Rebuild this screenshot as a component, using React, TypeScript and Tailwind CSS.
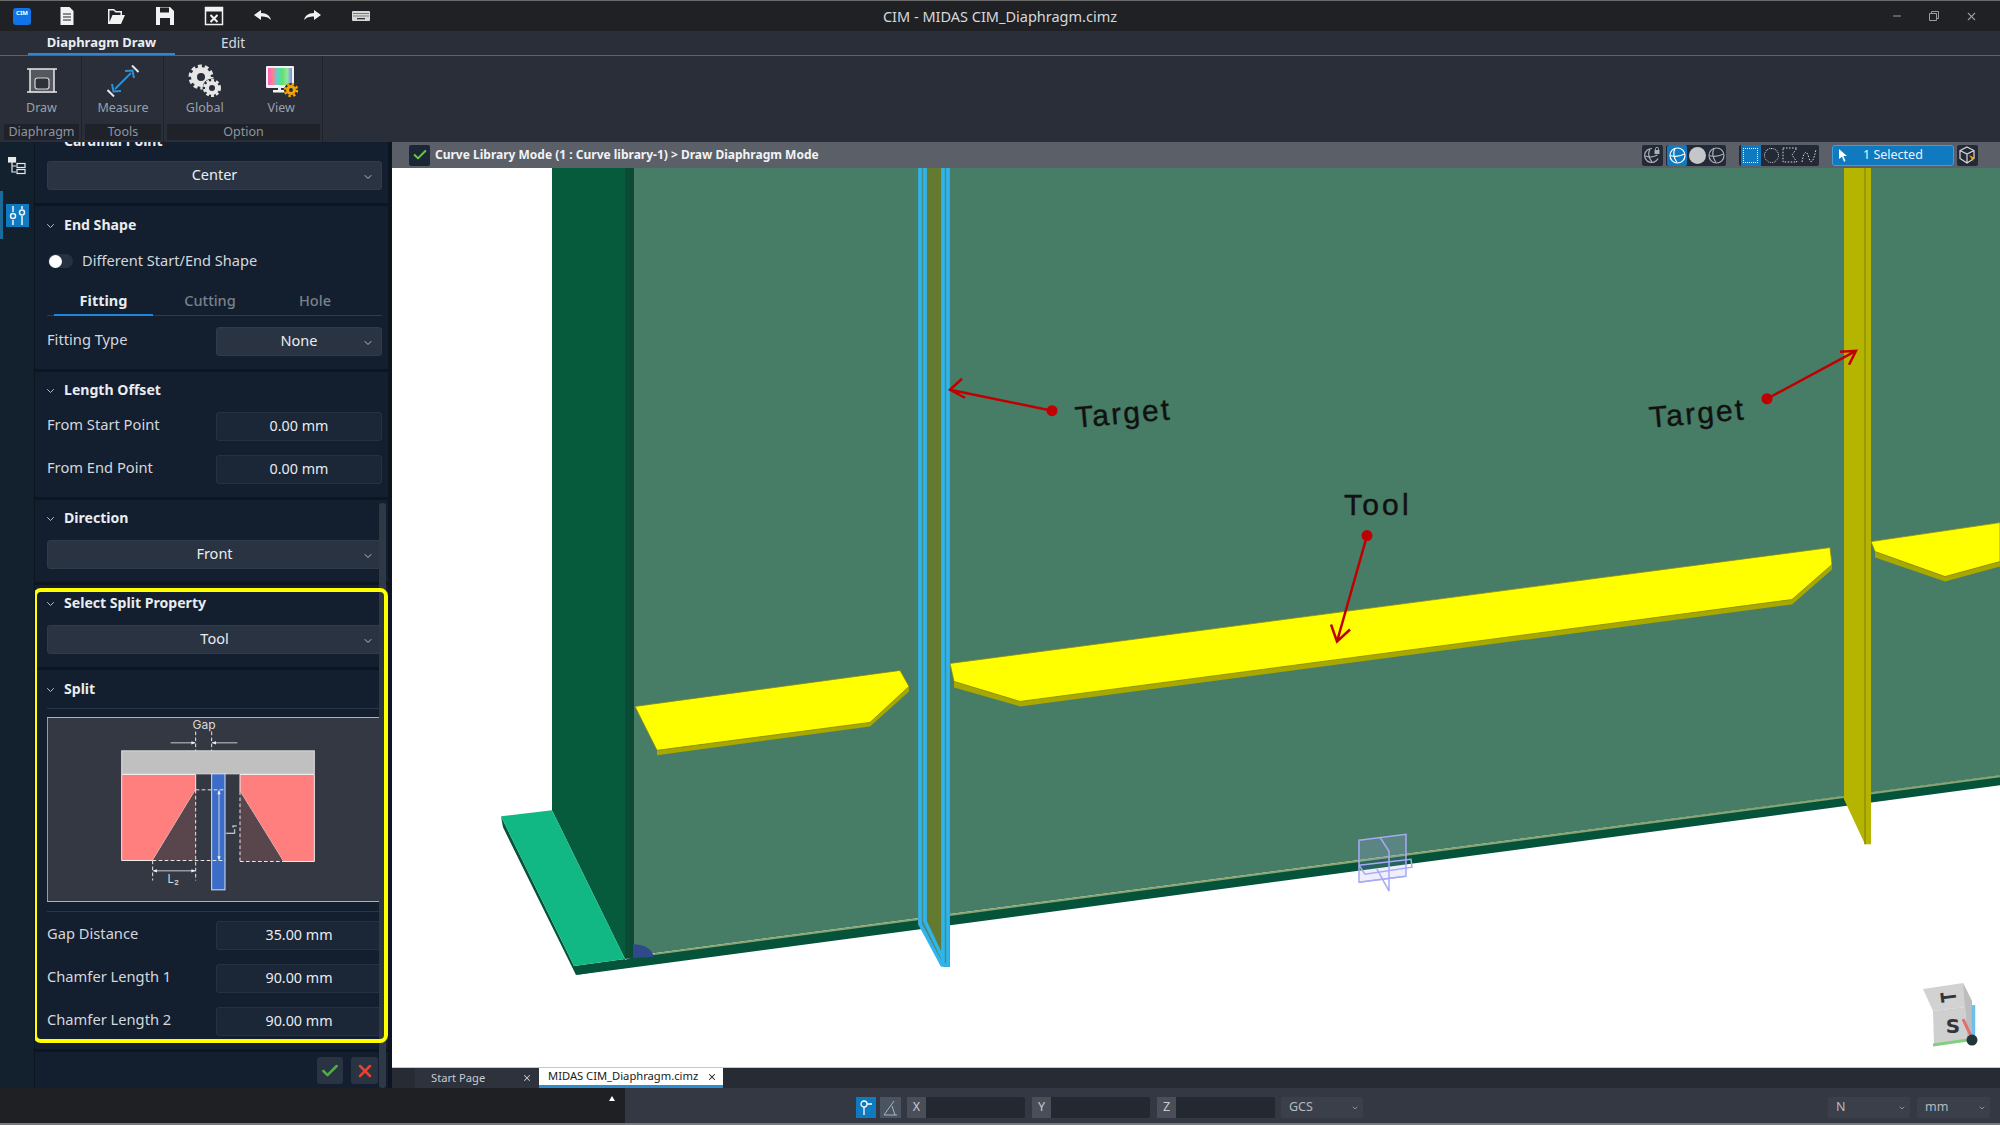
import { ChevronDown, Check, X, Minus } from "lucide-react";
import type { ReactNode } from "react";

const SectionGap = () => <div className="h-[3px] shrink-0 -ml-[12px] -mr-[6px] bg-[#0c1520]" />;

const Chevron = ({ className = "" }: { className?: string }) => (
  <ChevronDown size={12} strokeWidth={2} className={`text-[#b8bec8] ${className}`} />
);

const Header = ({ title, className = "" }: { title: string; className?: string }) => (
  <div className={`flex h-5 items-center ${className}`}>
    <Chevron className="ml-[-3px] w-[13px]" />
    <span className="ml-[7px] pb-[2px] text-[14.1px] font-bold text-[#e9ecf0]">{title}</span>
  </div>
);

const Select = ({ value, className = "" }: { value: string; className?: string }) => (
  <div className={`relative flex h-[29px] items-center justify-center rounded-[3px] border border-[#2f3a4a] bg-[#2a3342] pb-[2px] text-[14.5px] text-[#e9ecf0] ${className}`}>
    {value}
    <Chevron className="absolute right-[7px] top-[9px]" />
  </div>
);

const Field = ({ label, value, className = "" }: { label: string; value: string; className?: string }) => (
  <div className={`flex h-[29px] items-center justify-between ${className}`}>
    <span className="pb-[5px] text-[14.7px] text-[#d3d7dd]">{label}</span>
    <div className="flex h-full w-[166px] items-center justify-center rounded-[3px] border border-[#263143] bg-[#1b2636] pb-[2px] text-[14.3px] text-[#e9ecf0]">{value}</div>
  </div>
);

const TopIcon = ({ children }: { children: ReactNode }) => (
  <svg width="20" height="20" viewBox="0 0 20 20" className="block">{children}</svg>
);

const TitleBar = () => (
  <div className="relative flex h-[31px] items-center border-t border-[#6a6a6a] bg-[#1f2125]">
    <div className="ml-[13px] flex h-[17px] w-[18px] items-start justify-center rounded-[3px] bg-[#1272e8] pt-[2px] text-[6px] font-bold leading-[7px] text-white">CIM</div>
    <div className="ml-[26px] flex items-center gap-[29px]">
      <TopIcon><path d="M3.500 1h9l4 4v14h-13z" fill="#f2f2f2" /><path d="M6 8h8M6 11h8M6 14h8" stroke="#1f2125" strokeWidth="1" /></TopIcon>
      <TopIcon><path d="M2 18V3h6l2 2h6v4h3l-4 9zM3.500 16l3-7h8V6.500H9.500L7.500 4.500h-4z" fill="#f2f2f2" fillRule="evenodd" /></TopIcon>
      <TopIcon><path d="M1 1h14l4 4v14H1z" fill="#f2f2f2" /><path d="M5 1.500h9v5H5zM5 12h10v7H5z" fill="#1f2125" /></TopIcon>
      <TopIcon><rect x="1.500" y="1.500" width="17" height="17" fill="none" stroke="#f2f2f2" strokeWidth="1.500" /><rect x="1.500" y="1.500" width="17" height="4" fill="#f2f2f2" /><path d="M6.500 9l7 7M13.500 9l-7 7" stroke="#f2f2f2" strokeWidth="2" /></TopIcon>
      <TopIcon><path d="M1 9l7-5v3c6 0 9 3 10 7-2.500-2.500-5-3.500-10-3.500V14z" fill="#f2f2f2" /></TopIcon>
      <TopIcon><path d="M19 9l-7-5v3C6 7 3 10 2 14c2.500-2.500 5-3.500 10-3.500V14z" fill="#f2f2f2" /></TopIcon>
      <TopIcon><rect x="1" y="5" width="18" height="10" rx="1" fill="#d8d8d8" /><path d="M2.500 7.500h15M2.500 10h15" stroke="#1f2125" strokeWidth="1" strokeDasharray="1 1" /><path d="M6 12.700h8" stroke="#1f2125" strokeWidth="1.200" /></TopIcon>
    </div>
    <span className="absolute left-0 right-0 pt-[1px] text-center text-[14.5px] text-[#d6d8dc]">CIM - MIDAS CIM_Diaphragm.cimz</span>
    <div className="ml-auto mr-[22px] flex items-center gap-[25px] text-[#9a9ca0]">
      <Minus size={12} />
      <svg width="12" height="12" viewBox="0 0 12 12" fill="none" stroke="currentColor"><path d="M1.500 3.500h7v7h-7zM3.500 3.500v-2h7v7h-2" /></svg>
      <X size={13} />
    </div>
  </div>
);

const TabStrip = () => (
  <div className="flex h-[25px] items-stretch border-b border-[#2f6ea8] bg-[#292e38] text-[14px]">
    <div className="ml-[28px] flex w-[147px] items-center justify-center border-b-2 border-[#2f86d2] pt-[2px] text-[13px] font-bold text-[#eceef2]">Diaphragm Draw</div>
    <div className="ml-[31px] flex w-[54px] items-center justify-center pt-[1px] text-[13.5px] text-[#d8dbe0]">Edit</div>
  </div>
);

const RibbonButton = ({ label, icon, w }: { label: string; icon: ReactNode; w: string }) => (
  <div className={`flex flex-col items-center ${w}`}>
    <div className="flex h-[34px] w-full items-center justify-center">{icon}</div>
    <span className="mt-[2px] text-[12.5px] leading-[16px] text-[#99a0ad]">{label}</span>
  </div>
);

const RibbonGroup = ({ label, children, w }: { label: string; children: ReactNode; w: string }) => (
  <div className={`flex flex-col border-r border-[#1f2329] pr-[2px] ${w}`}>
    <div className="flex h-[68px] pt-[8px]">{children}</div>
    <div className="flex h-[16px] items-center justify-center bg-[#1f2329] text-[12.5px] text-[#8e95a2]">{label}</div>
  </div>
);

const Ribbon = () => (
  <div className="flex h-[86px] gap-[3px] bg-[#2a2e38] pl-[4px]">
    <RibbonGroup label="Diaphragm" w="w-[78px]">
      <RibbonButton label="Draw" w="w-[76px]" icon={
        <svg width="32" height="28" viewBox="0 0 32 28">
          <rect x="4" y="2" width="24" height="24" fill="#55585e" />
          <path d="M1 2h30M1 25h30M4 2v23M28 2v23" stroke="#e8e8e8" strokeWidth="1.500" />
          <rect x="9" y="11" width="14" height="11" rx="2.500" fill="#2d3138" stroke="#d5d5d5" strokeWidth="1.200" />
        </svg>
      } />
    </RibbonGroup>
    <RibbonGroup label="Tools" w="w-[79px]">
      <RibbonButton label="Measure" w="w-[77px]" icon={
        <svg width="32" height="32" viewBox="0 0 32 32" fill="none">
          <path d="M8 24L24 8" stroke="#2f8fd6" strokeWidth="2" />
          <path d="M5 19l1.500 7.500L14 26M27 13l-1.500-7.500L18 6" stroke="#2f8fd6" strokeWidth="2" />
          <path d="M0.500 25l6.500 6.500M25 0.500l6.500 6.500" stroke="#e8e8e8" strokeWidth="2" />
        </svg>
      } />
    </RibbonGroup>
    <RibbonGroup label="Option" w="w-[156px]">
      <RibbonButton label="Global" w="w-[76px]" icon={
        <svg width="34" height="34" viewBox="0 0 34 34" fill="none" stroke="#e6e6e6">
          <circle cx="13" cy="13" r="7" strokeWidth="6" />
          <circle cx="13" cy="13" r="10.500" strokeWidth="4" strokeDasharray="3.800 2.800" />
          <circle cx="24" cy="24" r="9.500" fill="#2a2e38" stroke="none" />
          <circle cx="24" cy="24" r="5" strokeWidth="4" />
          <circle cx="24" cy="24" r="7.500" strokeWidth="3" strokeDasharray="2.800 2.100" />
        </svg>
      } />
      <RibbonButton label="View" w="w-[78px]" icon={
        <svg width="33" height="34" viewBox="0 0 33 34">
          <defs>
            <linearGradient id="rainbow" x1="0" x2="1" y1="0" y2="0">
              <stop offset="0" stopColor="#ff60c0" />
              <stop offset="0.2" stopColor="#ff8090" />
              <stop offset="0.4" stopColor="#50d8d0" />
              <stop offset="0.6" stopColor="#60e070" />
              <stop offset="0.8" stopColor="#90e8a0" />
              <stop offset="1" stopColor="#8a80f0" />
            </linearGradient>
          </defs>
          <rect x="1" y="2" width="28" height="22" rx="1" fill="#f2f2f2" />
          <rect x="3" y="4" width="24" height="17" fill="url(#rainbow)" />
          <path d="M8 26h14v2.500H8zM13 24h3v3h-3z" fill="#f2f2f2" />
          <circle cx="26" cy="26" r="7" fill="#2a2e38" />
          <circle cx="26" cy="26" r="3.500" fill="none" stroke="#f5a400" strokeWidth="3" />
          <circle cx="26" cy="26" r="6" fill="none" stroke="#f5a400" strokeWidth="2.500" strokeDasharray="2.400 2.300" />
        </svg>
      } />
    </RibbonGroup>
  </div>
);

const Rail = () => (
  <div className="flex w-[35px] shrink-0 flex-col items-stretch border-r border-[#0c1520] bg-[#13202e]">
    <div className="flex h-[49px] items-center justify-center pb-[2px]">
      <svg width="18" height="18" viewBox="0 0 18 18" fill="none" stroke="#e8e8e8" strokeWidth="1.200">
        <rect x="0.500" y="0.500" width="7" height="4.500" fill="#e8e8e8" />
        <path d="M4 5v10h4M4 9h4" />
        <rect x="9" y="6.500" width="8" height="4" />
        <rect x="9" y="12.500" width="8" height="4" />
      </svg>
    </div>
    <div className="flex h-[48px] items-center justify-center border-l-[3px] border-[#1a6a9a] pr-[3px]">
      <div className="flex h-[23px] w-[23px] items-center justify-center bg-[#0f7ac0]">
        <svg width="17" height="19" viewBox="0 0 17 19" fill="none" stroke="#e8f4ff" strokeWidth="1.500">
          <path d="M4 0v6M4 14v5M13 0v3M13 10v9" />
          <circle cx="4" cy="10" r="2.500" />
          <circle cx="13" cy="6.500" r="2.500" />
        </svg>
      </div>
    </div>
  </div>
);

const SplitDiagram = () => (
  <svg viewBox="51 22 1005 554" className="mt-2 block h-[185px] w-[335px] shrink-0">
    <rect x="52" y="23" width="1003" height="552" fill="#333842" stroke="#aeb2b8" strokeWidth="3" />
    <rect x="275" y="123" width="578" height="69" fill="#c0c0c0" stroke="#dcdcdc" strokeWidth="3" />
    <path d="M275 194H497V240L368 452H275Z" fill="#ff7f7f" stroke="#eeeeee" strokeWidth="3" />
    <path d="M630 194H853V455H760L630 245Z" fill="#ff7f7f" stroke="#eeeeee" strokeWidth="3" />
    <path d="M497 240V452H368Z" fill="#59454c" />
    <path d="M630 245L760 455H630Z" fill="#59454c" />
    <rect x="545" y="192" width="40" height="348" fill="#3a6cc8" stroke="#d8e0f0" strokeWidth="3" />
    <g stroke="#e8e8e8" strokeWidth="3" fill="none" strokeDasharray="11 7">
      <path d="M497 65V123M545 65V123M497 240V512M630 245V455M368 452V512" />
      <path d="M497 240H585M368 452H585M630 455H760" />
    </g>
    <g stroke="#e8e8e8" strokeWidth="2.500" fill="none">
      <path d="M422 99H495M622 99H547M370 483H495M567 244V448" />
    </g>
    <g fill="#f0f0f0">
      <path d="M497 99l-13-5v10zM545 99l13-5v10zM368 483l13-5v10zM497 483l-13-5v10zM567 240l-5 13h10zM567 452l-5-13h10z" />
    </g>
    <text x="522" y="58" textAnchor="middle" fontSize="36" fontFamily="Inter, sans-serif" fill="#dcdcdc">Gap</text>
    <text x="430" y="520" textAnchor="middle" fontSize="34" fontFamily="Inter, sans-serif" fill="#dcdcdc">L₂</text>
    <text x="0" y="0" transform="translate(616 360) rotate(-90)" textAnchor="middle" fontSize="34" fontFamily="Inter, sans-serif" fill="#dcdcdc">L₁</text>
  </svg>
);

const Panel = () => (
  <div className="relative flex min-w-0 flex-1 flex-col overflow-hidden bg-[#131f2e] pl-[12px] pr-[6px]">
    <div className="-mt-[12px] flex h-6 items-center pb-[3px] pl-[17px] text-[14px] font-bold text-[#e9ecf0]">Cardinal Point</div>
    <Select value="Center" className="mt-[7px]" />
    <div className="h-[13px] shrink-0" />
    <SectionGap />

    <Header title="End Shape" className="mt-[10px]" />
    <div className="mt-[15px] flex h-5 items-center">
      <div className="ml-[1px] flex h-[14px] w-[25px] items-center rounded-full bg-[#253141] pl-[1px]">
        <div className="h-[13px] w-[13px] rounded-full bg-white" />
      </div>
      <span className="ml-[9px] pb-[1px] text-[14.6px] text-[#d3d7dd]">Different Start/End Shape</span>
    </div>
    <div className="mt-[14px] flex h-[31px] border-b border-[#2f3a4a] pt-[2px] text-[14.5px]">
      <div className="ml-[7px] -mb-px flex w-[99px] items-center justify-center border-b-2 border-[#1f86dc] font-bold text-[#e9ecf0]">Fitting</div>
      <div className="ml-[8px] flex w-[98px] items-center justify-center font-medium text-[#7b818a]">Cutting</div>
      <div className="ml-[7px] flex w-[98px] items-center justify-center font-medium text-[#7b818a]">Hole</div>
    </div>
    <div className="mt-[11px] flex h-[29px] items-center justify-between">
      <span className="pb-[5px] text-[14.7px] text-[#d3d7dd]">Fitting Type</span>
      <Select value="None" className="w-[166px]" />
    </div>
    <div className="h-[13px] shrink-0" />
    <SectionGap />

    <Header title="Length Offset" className="mt-[9px]" />
    <Field label="From Start Point" value="0.00 mm" className="mt-[11px]" />
    <Field label="From End Point" value="0.00 mm" className="mt-[14px]" />
    <div className="h-[13px] shrink-0" />
    <SectionGap />

    <Header title="Direction" className="mt-[9px]" />
    <Select value="Front" className="mt-[11px]" />
    <div className="h-[13px] shrink-0" />
    <SectionGap />

    <Header title="Select Split Property" className="mt-[9px]" />
    <Select value="Tool" className="mt-[11px]" />
    <div className="h-[13px] shrink-0" />
    <SectionGap />

    <Header title="Split" className="mt-[10px]" />
    <div className="mt-[8px] h-px shrink-0 bg-[#2a3545]" />
    <SplitDiagram />
    <div className="mt-[9px] h-px shrink-0 bg-[#2a3545]" />
    <Field label="Gap Distance" value="35.00 mm" className="mt-[9px]" />
    <Field label="Chamfer Length 1" value="90.00 mm" className="mt-[14px]" />
    <Field label="Chamfer Length 2" value="90.00 mm" className="mt-[14px]" />
    <div className="mt-[13px] h-[3px] shrink-0 -ml-[12px] -mr-[6px] bg-[#0c1520]" />
    <div className="mt-[5px] flex justify-end gap-[8px] pr-[4px]">
      <div className="flex h-[27px] w-[26px] items-center justify-center rounded-[3px] bg-[#2a3342]"><Check size={20} strokeWidth={3} className="text-[#4caf3f]" /></div>
      <div className="flex h-[27px] w-[27px] items-center justify-center rounded-[3px] bg-[#2a3342]"><X size={20} strokeWidth={3} className="text-[#e8432f]" /></div>
    </div>

    {/* annotation and scrollbar sit over the panel */}
    <div className="absolute right-[2px] top-[361px] bottom-0 w-[7px] rounded-[3px] bg-[#2f3845]" />
    <div className="absolute left-[-2px] right-0 top-[446px] h-[455px] rounded-[8px] border-[4px] border-[#ffff00]" />
  </div>
);

const ToolGroup = ({ children, w }: { children: ReactNode; w: string }) => (
  <div className={`flex h-[21px] items-center justify-around rounded-[2px] bg-[#232a36] ${w}`}>{children}</div>
);

const Globe = ({ fill = "none", stroke = "#aab0b8" }: { fill?: string; stroke?: string }) => (
  <svg width="17" height="17" viewBox="0 0 17 17" fill={fill} stroke={stroke} strokeWidth="1.200">
    <circle cx="8.500" cy="8.500" r="7.500" />
    <path d="M1.500 8.500c4 1.500 9 1 14-1.500M6 1.500c-2 4-1.500 9 2 14" fill="none" />
  </svg>
);

const ViewToolbar = () => (
  <div className="flex h-[26px] items-center bg-[#5b6068] pl-[17px]">
    <div className="flex h-[21px] w-[21px] items-center justify-center rounded-[2px] bg-[#1b2636]"><Check size={16} strokeWidth={3} className="text-[#6cc644]" /></div>
    <span className="ml-[5px] text-[12px] font-bold text-[#f2f3f5]">Curve Library Mode (1 : Curve library-1) &gt; Draw Diaphragm Mode</span>
    <div className="ml-auto flex items-center gap-[3px]">
      <ToolGroup w="w-[21px]">
        <svg width="17" height="17" viewBox="0 0 17 17" fill="none" stroke="#aab0b8" strokeWidth="1.200">
          <path d="M14 11.500A7 7 0 1 1 8 1.500M1.500 9c3 1.500 8 1 12-1M6 2c-2 4-1.500 9 2 13" />
          <rect x="10.500" y="3" width="5" height="4" fill="#aab0b8" stroke="none" />
          <path d="M11.500 3V1.800a1.500 1.500 0 0 1 3 0V3" strokeWidth="0.900" />
        </svg>
      </ToolGroup>
      <ToolGroup w="w-[60px]">
        <div className="flex h-full w-[20px] items-center justify-center rounded-[2px] bg-[#0f7ac0]"><Globe stroke="#ffffff" /></div>
        <div className="h-[17px] w-[17px] rounded-full bg-[#c4c6ca]" />
        <Globe />
      </ToolGroup>
      <div className="w-[7px]" />
      <ToolGroup w="w-[80px]">
        <div className="flex h-full w-[20px] items-center justify-center bg-[#0f7ac0]"><div className="h-[15px] w-[15px] border border-dotted border-white" /></div>
        <div className="h-[15px] w-[15px] rounded-full border border-dotted border-[#d8dade]" />
        <svg width="16" height="16" viewBox="0 0 16 16" fill="none" stroke="#d8dade" strokeDasharray="1.500 1.500"><path d="M1 1h14l-5 7 5 7H1z" /></svg>
        <svg width="16" height="16" viewBox="0 0 16 16" fill="none" stroke="#d8dade" strokeDasharray="1.500 1.500"><path d="M1 15c2-12 5-12 7-4s5 2 7-9" /></svg>
      </ToolGroup>
      <div className="w-[7px]" />
      <div className="flex h-[21px] w-[122px] items-center rounded-[3px] border border-[#3f9fdc] bg-[#0f7ac0] pl-[5px] text-[12.5px] text-[#e8f3fb]">
        <svg width="10" height="13" viewBox="0 0 10 13"><path d="M1 0l8 7H5.500l2 5-1.500.7-2-5L1 10z" fill="#ffffff" /></svg>
        <span className="ml-[15px]">1 Selected</span>
      </div>
      <ToolGroup w="w-[21px] mr-[22px]">
        <svg width="17" height="18" viewBox="0 0 17 18" fill="none" stroke="#d8dade" strokeWidth="1.200">
          <path d="M8 1l7 3.500v8L8 17l-7-4.500v-8zM1 4.500L8 8l7-3.500M8 8v9" />
          <path d="M10 9l6 3-2.500 1 1 3z" fill="#f5a400" stroke="none" />
        </svg>
      </ToolGroup>
    </div>
  </div>
);

const Scene = () => (
  <svg viewBox="392 168 1608 900" preserveAspectRatio="none" className="block min-h-0 w-full flex-1 bg-white">
    {/* web + bottom flange */}
    <path d="M576 976L2000 786V776L634 958Z" fill="#05533a" />
    <path d="M634 168H2000V776L654 954L634 957Z" fill="#477c66" />
    <path d="M654 955L2000 777" stroke="#8aa56f" strokeWidth="2" fill="none" />

    {/* left flange and plate */}
    <path d="M552 168H625V960L552 811Z" fill="#055b3c" />
    <path d="M625 168H634V959L625 960Z" fill="#0b4a35" />
    <path d="M501 817L503 828L576 976L625 968L625 960L574 967Z" fill="#05533a" />
    <path d="M501 817L552 811L625 960L574 967Z" fill="#12b884" />
    <path d="M633 959V945C645 945 652 950 654 958Z" fill="#2f4a8a" />

    {/* yellow plates */}
    <path d="M635 707L657 751V756L870 727L909 692V687L870 723L657 751Z" fill="#a8a800" />
    <path d="M635 707L900 671L909 687L870 723L657 751Z" fill="#ffff00" stroke="#8a8a10" strokeWidth="0.800" />
    <path d="M954 682V688L1020 707L1792 605L1832 570V565L1792 600L1020 702Z" fill="#a8a800" />
    <path d="M950 664L1830 548L1832 565L1792 600L1020 702L954 682Z" fill="#ffff00" stroke="#8a8a10" strokeWidth="0.800" />
    <path d="M1875 552L1945 577L2000 562V567L1945 582L1875 558Z" fill="#a8a800" />
    <path d="M1871 542L2000 523V562L1945 577L1875 552Z" fill="#ffff00" stroke="#8a8a10" strokeWidth="0.800" />

    {/* selected stiffener */}
    <path d="M918 168H950V968H944L918 925Z" fill="#4a8a80" />
    <path d="M927 168H941V964L927 930Z" fill="#647a2e" />
    <g stroke="#2fb5ee" strokeWidth="3.500" fill="none">
      <path d="M920 168V925L942 966H948V168" />
      <path d="M925 168V922L943 960M943 168V966" />
    </g>

    {/* right stiffener */}
    <path d="M1844 168H1871V845H1865L1844 800Z" fill="#b5b500" />
    <path d="M1865 168V845" stroke="#8f8f00" strokeWidth="1.500" />

    {/* ghost cube */}
    <g stroke="#a9aaf5" strokeWidth="1.500" fill="none">
      <path d="M1359 841L1406 835V877L1359 883Z" fill="#a9aaf5" fillOpacity="0.2" />
      <path d="M1380 838L1389 852V892L1377 870M1359 866L1411 860L1412 868L1365 875L1359 866M1406 877L1359 883" />
    </g>

    {/* annotations */}
    <g stroke="#c00000" strokeWidth="2.500" fill="none">
      <path d="M1052 411L950 390M962 379L950 390L965 398" />
      <path d="M1767 399L1856 351M1840 352L1856 351L1849 365" />
      <path d="M1367 536L1337 642M1331 625L1337 642L1350 630" />
    </g>
    <g fill="#c00000">
      <circle cx="1052" cy="411" r="5.500" />
      <circle cx="1767" cy="399" r="5.500" />
      <circle cx="1367" cy="536" r="5.500" />
    </g>
    <g fontFamily="'Liberation Sans', sans-serif" fontSize="30" letterSpacing="2.200" fill="#111111" stroke="#111111" strokeWidth="0.400">
      <text x="1076" y="428" transform="rotate(-5 1076 428)">Target</text>
      <text x="1650" y="428" transform="rotate(-5 1650 428)">Target</text>
      <text x="1344" y="515" letterSpacing="3.200">Tool</text>
    </g>

    {/* view cube */}
    <path d="M1923 990L1963 984L1972 1002L1965 1008L1933 1012Z" fill="#d2d2d2" />
    <path d="M1933 1012L1965 1008L1967 1040L1934 1046Z" fill="#cfcfcf" />
    <path d="M1963 984L1972 1002V1038L1967 1040L1965 1008Z" fill="#bdbdbd" />
    <text x="0" y="0" transform="translate(1956 997) rotate(-97) scale(0.9 1.3)" fontSize="16" fontWeight="700" fontFamily="'DejaVu Sans', sans-serif" fill="#33353a" textAnchor="middle">T</text>
    <text x="1953" y="1034" fontSize="20" fontWeight="700" fontFamily="'DejaVu Sans', sans-serif" fill="#33353a" textAnchor="middle">S</text>
    <path d="M1933 1046L1968 1041" stroke="#7fd07f" strokeWidth="3" />
    <path d="M1963 1020L1972 1039" stroke="#e07070" strokeWidth="3" />
    <path d="M1973.500 1006V1038" stroke="#6cc0ea" strokeWidth="3.500" />
    <circle cx="1972" cy="1041" r="5.500" fill="#20363a" />
  </svg>
);

const DocTabs = () => (
  <div className="flex h-[21px] border-t border-[#c8c8c8] bg-[#272b34] pl-[23px] text-[11.2px]">
    <div className="flex w-[124px] items-center justify-between bg-[#2d323c] pl-[16px] pr-[7px] text-[#c8ccd2]">
      <span>Start Page</span><X size={10} strokeWidth={2.500} />
    </div>
    <div className="flex w-[184px] items-center justify-between border-b-[3px] border-[#2a8fd0] bg-white pl-[9px] pr-[6px] text-[#202020]">
      <span>MIDAS CIM_Diaphragm.cimz</span><X size={10} strokeWidth={2.500} />
    </div>
  </div>
);

const StatusDrop = ({ value, w, className = "" }: { value: string; w: string; className?: string }) => (
  <div className={`flex h-[21px] items-center justify-between rounded-[2px] bg-[#3a3f4a] pl-[8px] pr-[4px] text-[12.5px] text-[#b6bac2] ${w} ${className}`}>
    {value}<ChevronDown size={8} />
  </div>
);

const Coord = ({ label }: { label: string }) => (
  <div className="flex h-[21px] w-[118px] items-stretch text-[12.5px] text-[#c8ccd2]">
    <div className="flex w-[19px] items-center justify-center bg-[#494e59]">{label}</div>
    <div className="flex-1 rounded-r-[2px] bg-[#242830]" />
  </div>
);

const StatusBar = () => (
  <div className="flex h-[37px] border-b-2 border-[#77797d]">
    <div className="relative w-[625px] bg-[#1e2024]">
      <div className="absolute right-[10px] top-[8px] h-0 w-0 border-x-[3px] border-b-[5px] border-x-transparent border-b-white" />
    </div>
    <div className="flex flex-1 items-center bg-[#333843] pl-[231px] pr-[10px] pt-[4px]">
      <div className="flex h-[21px] w-[20px] items-center justify-center bg-[#0f7ac0]">
        <svg width="14" height="17" viewBox="0 0 14 17" fill="none" stroke="#ffffff" strokeWidth="1.300"><circle cx="5" cy="5" r="3" /><path d="M5 8v8M8 5h5" /></svg>
      </div>
      <div className="ml-[4px] flex h-[21px] w-[21px] items-center justify-center bg-[#4a5460]">
        <svg width="15" height="16" viewBox="0 0 15 16" fill="none" stroke="#aab4c0"><path d="M1 15L11 1M1 15h13M9 6l3 9" /></svg>
      </div>
      <div className="ml-[6px] flex gap-[7px]">
        <Coord label="X" />
        <Coord label="Y" />
        <Coord label="Z" />
      </div>
      <StatusDrop value="GCS" w="w-[82px]" className="ml-[6px]" />
      <StatusDrop value="N" w="w-[82px]" className="ml-auto" />
      <StatusDrop value="mm" w="w-[73px]" className="ml-[7px]" />
    </div>
  </div>
);

export default function App() {
  return (
    <div className="flex h-[1125px] w-[2000px] flex-col overflow-hidden bg-[#1f2125] font-['Noto_Sans',sans-serif]">
      <TitleBar />
      <TabStrip />
      <Ribbon />
      <div className="flex h-[946px] min-h-0">
        <div className="flex w-[392px] shrink-0 border-r-[4px] border-[#0c1520]">
          <Rail />
          <Panel />
        </div>
        <div className="flex min-w-0 flex-1 flex-col">
          <ViewToolbar />
          <Scene />
          <DocTabs />
        </div>
      </div>
      <StatusBar />
    </div>
  );
}
